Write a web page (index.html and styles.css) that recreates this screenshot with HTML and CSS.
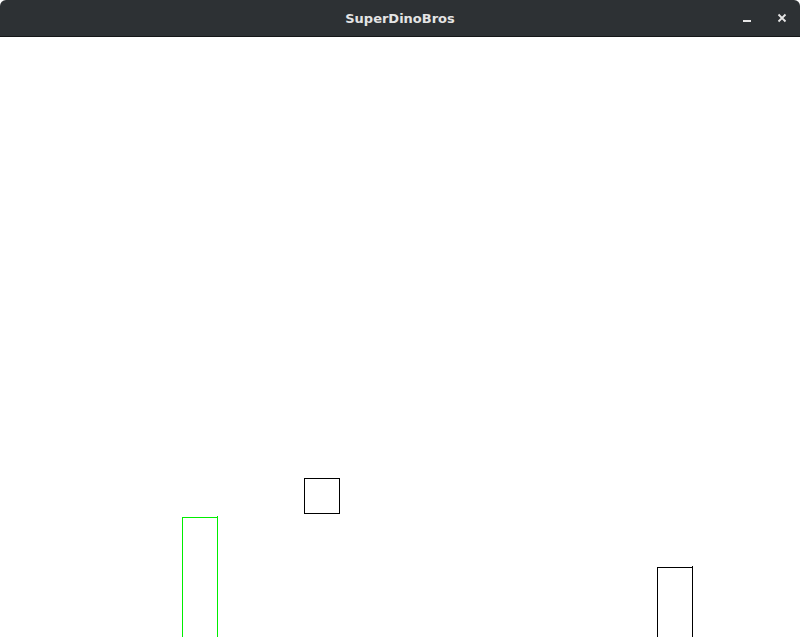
FILE: index.html
```html
<!DOCTYPE html>
<html>
<head>
<meta charset="utf-8">
<link rel="stylesheet" href="styles.css">
</head>
<body>
<div class="window">
  <header class="titlebar">
    <span class="title">SuperDinoBros</span>
    <div class="controls">
      <span class="btn minimize"><svg width="10" height="10" viewBox="0 0 10 10"><rect x="1" y="7" width="8" height="2" fill="#e6e6e6"/></svg></span>
      <span class="btn close"><svg width="10" height="10" viewBox="0 0 10 10"><path d="M1.5 1.5 L8.5 8.5 M8.5 1.5 L1.5 8.5" stroke="#e6e6e6" stroke-width="1.8" fill="none"/></svg></span>
    </div>
  </header>
  <main class="canvas">
    <div class="box block"></div>
    <div class="box pipe-green"></div>
    <div class="box pipe-black"></div>
  </main>
</div>
</body>
</html>
```
FILE: styles.css
```css
html, body {
  margin: 0;
  padding: 0;
  background: #ffffff;
}
.window {
  width: 800px;
  height: 637px;
  overflow: hidden;
  display: flex;
  flex-direction: column;
}
.titlebar {
  height: 36px;
  flex: 0 0 36px;
  background: #2d3134;
  border-bottom: 1px solid #151718;
  border-radius: 6px 6px 0 0;
  position: relative;
  display: flex;
  align-items: center;
  justify-content: center;
}
.title {
  font-family: "DejaVu Sans", sans-serif;
  font-weight: bold;
  font-size: 13px;
  color: #e4e4e4;
  margin-top: 1px;
}
.controls {
  position: absolute;
  right: 0;
  top: 0;
  height: 36px;
  display: flex;
  align-items: center;
}
.btn {
  display: flex;
  width: 34px;
  height: 36px;
  align-items: center;
  justify-content: center;
}
.close { width: 36px; }
.canvas {
  position: relative;
  flex: 1;
  background: #ffffff;
  overflow: hidden;
}
.box {
  position: absolute;
  box-sizing: border-box;
  width: 36px;
  border: 1px solid #000;
}
.block {
  left: 304px;
  top: 441px;
  height: 36px;
}
.pipe-green {
  left: 182px;
  top: 480px;
  height: 140px;
  border-color: #00ee00;
}
.pipe-black {
  left: 657px;
  top: 530px;
  height: 90px;
}
.pipe-green::after, .pipe-black::after {
  content: "";
  position: absolute;
  right: -1px;
  top: -2px;
  width: 1px;
  height: 2px;
}
.pipe-green::after { background: #00ee00; }
.pipe-black::after { background: #000; }
```
